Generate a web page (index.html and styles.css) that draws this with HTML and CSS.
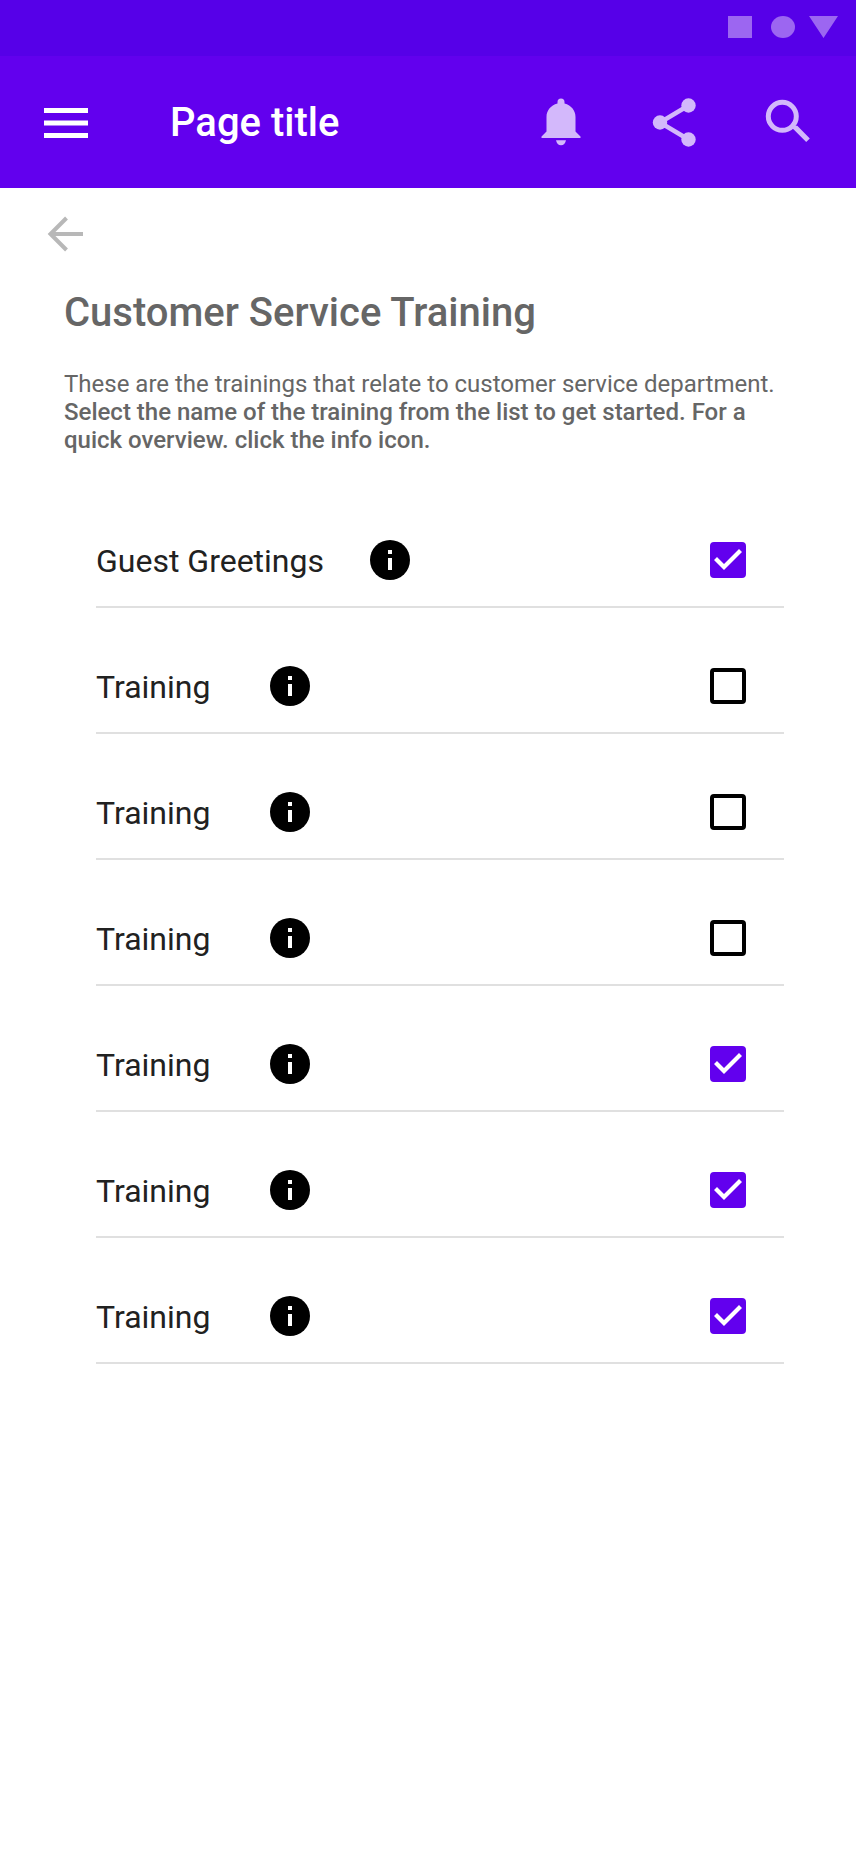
FILE: index.html
```html
<!DOCTYPE html>
<html lang="en">
<head>
<meta charset="utf-8">
<meta name="viewport" content="width=device-width, initial-scale=1">
<title>Customer Service Training</title>
<link rel="stylesheet" href="styles.css">
</head>
<body>
<div class="status-bar" aria-hidden="true">
  <svg width="110" height="22" viewBox="0 0 110 22" fill="currentColor"><path d="M0 0h24v22H0zM81 0h29L95.500 22z"/><ellipse cx="55" cy="11" rx="12" ry="11"/></svg>
</div>
<header class="app-bar">
  <button class="icon-button menu-button" aria-label="Menu"><svg width="44" height="30" viewBox="0 0 44 30" fill="currentColor"><path d="M0 0h44v5H0zM0 12.500h44v5H0zM0 25h44v5H0z"/></svg></button>
  <h1 class="page-title">Page title</h1>
  <div class="actions">
    <button class="icon-button" aria-label="Notifications"><svg width="48" height="48" viewBox="-1 1 48 48" fill="currentColor"><path d="M20.500 5.600V4a3.500 3.500 0 0 1 7 0v1.600C34.500 7.400 38.500 12.800 38.500 19v14.500l5 5V40h-39v-1.500l5-5V19c0-6.200 4-11.600 11-13.400zM19 42.300h10c-.6 3.100-2.400 5-5 5s-4.400-1.900-5-5z"/></svg></button>
    <button class="icon-button" aria-label="Share"><svg width="48" height="48" viewBox="0 1 48 48"><path d="M38.500 7.500 10 24.500l28.500 17" fill="none" stroke="currentColor" stroke-width="4.500"/><g fill="currentColor"><circle cx="38.500" cy="7.500" r="7.200"/><circle cx="10" cy="24.500" r="7.200"/><circle cx="38.500" cy="41.500" r="7.200"/></g></svg></button>
    <button class="icon-button" aria-label="Search"><svg width="48" height="48" viewBox="0 1 48 48"><circle cx="18.300" cy="18.300" r="14" fill="none" stroke="currentColor" stroke-width="5"/><path fill="currentColor" d="m27.800 30 2.200-2.200h3.300l12.500 12.600-3.600 3.500-12.500-12.500z"/></svg></button>
  </div>
</header>
<main class="content">
  <button class="back-button" aria-label="Back"><svg width="36" height="36" viewBox="0 0 36 36" fill="none" stroke="currentColor" stroke-width="4"><path d="M35 18H4M18.500 2 2.500 18l16 16"/></svg></button>
  <section class="intro">
    <h2 class="heading">Customer Service Training</h2>
    <p class="description">These are the trainings that relate to customer service department.<br><strong>Select the name of the training from the list to get started. For a<br>quick overview. click the info icon.</strong></p>
  </section>
  <ul class="trainings">
    <li class="training"><label class="name name-long" for="t1">Guest Greetings</label><button class="info" aria-label="About Guest Greetings"><svg viewBox="0 0 40 40"><circle cx="20" cy="20" r="20"/><path fill="#fff" d="M18 10h4v4h-4zM18 18h4v12h-4z"/></svg></button><input class="check" id="t1" type="checkbox" checked></li>
    <li class="training"><label class="name" for="t2">Training</label><button class="info" aria-label="About training"><svg viewBox="0 0 40 40"><circle cx="20" cy="20" r="20"/><path fill="#fff" d="M18 10h4v4h-4zM18 18h4v12h-4z"/></svg></button><input class="check" id="t2" type="checkbox"></li>
    <li class="training"><label class="name" for="t3">Training</label><button class="info" aria-label="About training"><svg viewBox="0 0 40 40"><circle cx="20" cy="20" r="20"/><path fill="#fff" d="M18 10h4v4h-4zM18 18h4v12h-4z"/></svg></button><input class="check" id="t3" type="checkbox"></li>
    <li class="training"><label class="name" for="t4">Training</label><button class="info" aria-label="About training"><svg viewBox="0 0 40 40"><circle cx="20" cy="20" r="20"/><path fill="#fff" d="M18 10h4v4h-4zM18 18h4v12h-4z"/></svg></button><input class="check" id="t4" type="checkbox"></li>
    <li class="training"><label class="name" for="t5">Training</label><button class="info" aria-label="About training"><svg viewBox="0 0 40 40"><circle cx="20" cy="20" r="20"/><path fill="#fff" d="M18 10h4v4h-4zM18 18h4v12h-4z"/></svg></button><input class="check" id="t5" type="checkbox" checked></li>
    <li class="training"><label class="name" for="t6">Training</label><button class="info" aria-label="About training"><svg viewBox="0 0 40 40"><circle cx="20" cy="20" r="20"/><path fill="#fff" d="M18 10h4v4h-4zM18 18h4v12h-4z"/></svg></button><input class="check" id="t6" type="checkbox" checked></li>
    <li class="training"><label class="name" for="t7">Training</label><button class="info" aria-label="About training"><svg viewBox="0 0 40 40"><circle cx="20" cy="20" r="20"/><path fill="#fff" d="M18 10h4v4h-4zM18 18h4v12h-4z"/></svg></button><input class="check" id="t7" type="checkbox" checked></li>
  </ul>
</main>
</body>
</html>
```
FILE: styles.css
```css
* {
  box-sizing: border-box;
}

body {
  margin: 0;
  background: #fff;
  color: #212121;
  font-family: Roboto, "Liberation Sans", sans-serif;
}

button {
  display: block;
  padding: 0;
  border: 0;
  background: none;
  color: inherit;
  cursor: pointer;
}

svg {
  display: block;
  overflow: visible;
}

.status-bar {
  display: flex;
  justify-content: flex-end;
  padding: 16px 18px 18px;
  background: #5600e8;
  color: #9c66f1;
}

.app-bar {
  display: flex;
  align-items: center;
  padding: 43px 44px 41px;
  background: #6200ee;
  color: #fff;
}

.page-title {
  flex: 1;
  margin: 0 0 0 82px;
  font-size: 40px;
  font-weight: 500;
  line-height: 48px;
}

.actions {
  display: flex;
  gap: 66px;
  color: #d3b8fb;
}

.content {
  padding: 28px 72px 48px 48px;
}

.back-button {
  color: #b8b8b8;
}

.intro {
  padding: 37px 0 0 16px;
  color: #666;
}

.heading {
  margin: 0 0 33px;
  font-size: 40px;
  font-weight: 500;
  line-height: 48px;
}

.description {
  margin: 0;
  font-size: 24px;
  line-height: 28px;
}

.description strong {
  font-weight: 500;
}

.trainings {
  margin: 28px 0 0;
  padding: 0 0 0 48px;
  list-style: none;
}

.training {
  display: flex;
  align-items: center;
  height: 126px;
  padding: 32px 38px 0 0;
  border-bottom: 2px solid #e0e0e0;
}

.name {
  min-width: 142px;
  margin-right: 32px;
  padding-top: 2px;
  font-size: 32px;
  line-height: 40px;
}

.name-long {
  min-width: 242px;
}

.info {
  width: 40px;
  height: 40px;
}

.check {
  appearance: none;
  display: grid;
  width: 36px;
  height: 36px;
  margin: 0 0 0 auto;
  border: 4px solid #000;
  border-radius: 4px;
}

.check:checked {
  border-color: #6200ee;
  background: #6200ee;
}

.check:checked::before {
  content: "";
  width: 28px;
  height: 28px;
  background: #fff;
  clip-path: polygon(0 14px, 3px 11px, 10px 18px, 25px 3px, 28px 6px, 10px 24px);
}
```
